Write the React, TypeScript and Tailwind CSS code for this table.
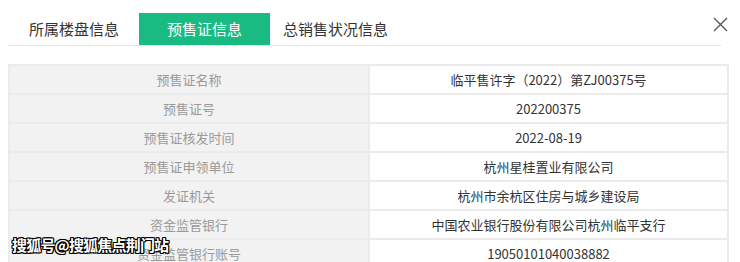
import React from "react";

const rows: [string, string][] = [
  ["预售证名称", "临平售许字（2022）第ZJ00375号"],
  ["预售证号", "202200375"],
  ["预售证核发时间", "2022-08-19"],
  ["预售证申领单位", "杭州星桂置业有限公司"],
  ["发证机关", "杭州市余杭区住房与城乡建设局"],
  ["资金监管银行", "中国农业银行股份有限公司杭州临平支行"],
  ["资金监管银行账号", "19050101040038882"],
  ["预售面积", "—"],
];

export default function App() {
  const font = { fontFamily: '"Microsoft YaHei", "Noto Sans CJK SC", sans-serif' };
  return (
    <div className="relative w-[740px] h-[262px] overflow-hidden bg-white" style={font}>
      <div className="pt-[14px] px-[8px] w-[729px]">
        <div className="flex items-end border-b border-[#e6e6e6] h-[32px] pl-[21px]">
          <div className="h-[32px] flex items-center text-[15px] text-[#333] w-[110px]">所属楼盘信息</div>
          <div className="h-[32px] w-[131px] bg-[#19bb82] text-white text-[15px] flex items-center justify-center">预售证信息</div>
          <div className="h-[32px] flex items-center text-[15px] text-[#333] pl-[13px]">总销售状况信息</div>
        </div>
      </div>
      <svg className="absolute left-[713px] top-[17px]" width="15" height="15" viewBox="0 0 15 15">
        <path d="M1 1 L14 14 M14 1 L1 14" stroke="#555" strokeWidth="1.4" fill="none" />
      </svg>
      <div className="px-[8px] pt-[18px]">
        <table className="w-[721px] border-collapse text-[13px]">
          <tbody>
            {rows.map(([k, v]) => (
              <tr key={k} className="h-[29px]">
                <td className="w-[360px] bg-[#f2f2f2] text-[#9a9a9a] text-center border-2 border-[#ebebeb] p-0">{k}</td>
                <td className="text-[#333] text-center border-2 border-[#ebebeb] p-0">{v}</td>
              </tr>
            ))}
          </tbody>
        </table>
      </div>
      <div
        className="absolute left-[12px] top-[235px] text-[15px] leading-[20px] font-bold text-white tracking-[-0.8px]"
        style={{ textShadow: "1px 1px 0 #000, -1px -1px 0 #000, 1px -1px 0 #000, -1px 1px 0 #000, 0 1px 0 #000, 1px 0 0 #000, 0 -1px 0 #000, -1px 0 0 #000" }}
      >
        搜狐号@搜狐焦点荆门站
      </div>
    </div>
  );
}
